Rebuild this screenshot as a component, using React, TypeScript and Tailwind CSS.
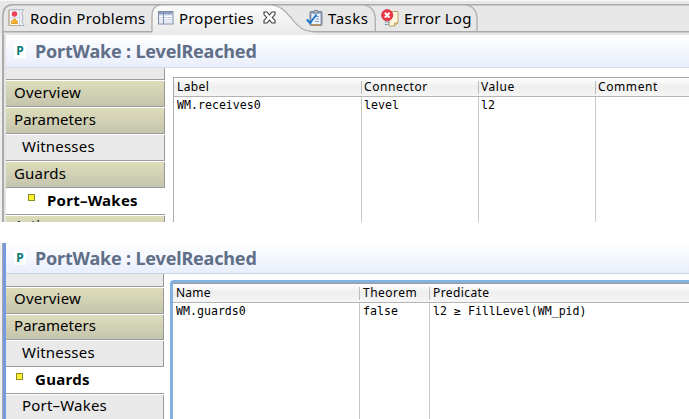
import type { ReactNode } from "react";

const SANS = "font-['Noto_Sans',sans-serif]";
const MONO = "font-['DejaVu_Sans_Mono',monospace]";

function ProblemsIcon() {
  return (
    <svg width="17" height="18" viewBox="0 0 17 18" className="block">
      <path d="M1 .8H15.5C14 3 13 5 14.5 7C16 9 14 10.500 14 12.500C14 14.500 16 15 16 16.500H1Z" fill="#f3f7fc" stroke="#a3acbc" strokeWidth="1" />
      <path d="M1 .8V16.500H12" fill="none" stroke="#c3a878" />
      <path d="M11.500 1V16M1 8.800H14" stroke="#c9d6ea" />
      <circle cx="6.500" cy="5" r="2.800" fill="#ed4354" />
      <path d="M6.500 9.500L9.500 12.500V14.500H3.500V12.500Z" fill="#fbb52c" stroke="#d58b1d" strokeWidth=".8" />
    </svg>
  );
}

function TableIcon() {
  return (
    <svg width="16" height="14" viewBox="0 0 16 14" className="block">
      <rect x=".5" y=".5" width="14.500" height="12.500" fill="#fff" stroke="#7d8ba5" />
      <rect x="1" y="1" width="13.500" height="2.500" fill="#8d9fc0" />
      <path d="M1 4H15M1 6.500H15M1 8.800H15M1 11H15" stroke="#b5c2d9" strokeWidth=".8" />
      <path d="M5.500 1V13" stroke="#7d8fae" />
    </svg>
  );
}

function CloseIcon() {
  return (
    <svg width="13" height="13" viewBox="0 0 13 13" className="block">
      <path d="M1 1H4L6.500 3.800L9 1H12V3.500L9.300 6.500L12 9.500V12H9L6.500 9.200L4 12H1V9.500L3.700 6.500L1 3.500Z" fill="#fff" stroke="#3d3d3d" strokeWidth="1.100" />
    </svg>
  );
}

function TasksIcon() {
  return (
    <svg width="17" height="18" viewBox="0 0 17 18" className="block">
      <rect x="4" y="2.500" width="12" height="14" rx="1" fill="#8e99af" stroke="#7884a0" />
      <path d="M14.500 16H5" stroke="#be9551" strokeWidth="1.500" />
      <rect x="5.500" y="4.500" width="9" height="10.500" fill="#eaf1fb" />
      <path d="M7 4L8 1.500H12L13 4Z" fill="#aab4c4" stroke="#7d879a" />
      <path d="M9 7.500H13M10 10H13M9 12.500H13" stroke="#7ba0d0" />
      <path d="M.8 10.500L4 14L10.500 5.500" fill="none" stroke="#1976cc" strokeWidth="1.900" />
    </svg>
  );
}

function ErrorLogIcon() {
  return (
    <svg width="18" height="18" viewBox="0 0 18 18" className="mt-px block">
      <path d="M6 2.500H17V14L13.500 17H8V12" fill="#fff6dc" stroke="#b9a36e" />
      <path d="M13.500 17V14H17" fill="#e6cc8b" stroke="#b08d4b" strokeWidth=".8" />
      <circle cx="6.200" cy="6.200" r="5.600" fill="#ec3545" stroke="#d52d3e" strokeWidth=".8" />
      <path d="M3.800 3.800L8.600 8.600M8.600 3.800L3.800 8.600" stroke="#fff" strokeWidth="2" />
      <path d="M4 13H9M4 15.500H7.500" stroke="#2d73a5" strokeWidth="1.200" strokeDasharray="1.500 1" />
    </svg>
  );
}

function TabBar() {
  return (
    <div className="relative h-[35px] w-full shrink-0 bg-[#e7e7e7]">
      <svg className="absolute inset-0" width="689" height="35" viewBox="0 0 689 35">
        <defs>
          <linearGradient id="tab" x1="0" y1="0" x2="0" y2="1">
            <stop offset="0" stopColor="#fcfcfc" />
            <stop offset="1" stopColor="#e9e9e9" />
          </linearGradient>
        </defs>
        <path d="M0 .5H689" stroke="#f8f8f8" />
        <path d="M2.800 35V16Q3 5 13 4.800H689M3 31.800H152M312 31.800H689" fill="none" stroke="#aaa" strokeWidth="1.500" />
        <path d="M152 32V16Q152 5 162 5H270C280 5 285 11 292 19C299 28 304 31 314 32V35H152Z" fill="url(#tab)" />
        <path d="M152 32V16Q152 5 162 5H270C280 5 285 11 292 19C299 28 304 31 314 31.800" fill="none" stroke="#aaa" strokeWidth="1.200" />
        <path d="M364 5Q374 6 375.300 18V31M466 5Q476 6 477 18V31" fill="none" stroke="#aaa" strokeWidth="1.200" />
      </svg>
      <div className={`relative flex h-[35px] items-center pb-0 pl-2 text-[15px] leading-[20px] text-black ${SANS}`}>
        <div className="flex w-[149px] items-center gap-[5px]">
          <ProblemsIcon />
          <span className="whitespace-nowrap tracking-[0.28px]">Rodin Problems</span>
        </div>
        <div className="flex w-[149px] items-center pl-[1px]">
          <TableIcon />
          <span className="ml-[5px] mr-[9px] w-[75px] whitespace-nowrap tracking-[0.2px]">Properties</span>
          <CloseIcon />
        </div>
        <div className="flex w-[75px] items-center gap-[5px]">
          <TasksIcon />
          <span className="tracking-[0.5px]">Tasks</span>
        </div>
        <div className="flex items-center gap-[5px]">
          <ErrorLogIcon />
          <span className="whitespace-nowrap tracking-[0.2px]">Error Log</span>
        </div>
      </div>
    </div>
  );
}

function Title({ className }: { className: string }) {
  return (
    <div className={`flex shrink-0 items-center border-b bg-gradient-to-b from-white to-[#e9eefb] pl-2 ${className}`}>
      <span className="flex h-[14px] w-[12px] items-center justify-center bg-white font-['Noto_Sans',sans-serif] text-[12px] font-bold text-[#087b74]">P</span>
      <h1 className={`ml-[9px] whitespace-nowrap text-[18px] font-bold leading-[24px] tracking-[-0.18px] text-[#5f6f88] ${SANS}`}>
        PortWake : LevelReached
      </h1>
    </div>
  );
}

type Kind = "section" | "sub" | "active";

function NavRow({ kind, className, children }: { kind: Kind; className: string; children: ReactNode }) {
  const look = {
    section: "border-r border-r-[#999] bg-gradient-to-b from-[#dddcba] to-[#c5c5ae]",
    sub: "border-r border-r-[#999] bg-[#e9e9e9]",
    active: "bg-white font-bold",
  }[kind];
  return (
    <div className="shrink-0 border-t border-[#9b9b9f] bg-white pt-px">
      <div className={`flex items-center whitespace-nowrap text-[15px] leading-[20px] text-black ${SANS} ${look} ${className}`}>
        {children}
      </div>
    </div>
  );
}

function Marker() {
  return <span className="mb-[5px] h-[7px] w-[7px] shrink-0 border border-[#8f8d20] bg-[#f9f132]" />;
}

interface Column {
  label: string;
  value: string;
  width: string;
  tracking: string;
}

function Table({ columns, inset }: { columns: Column[]; inset: string }) {
  return (
    <div className="flex min-h-0 flex-1 bg-white">
      {columns.map((c, i) => (
        <div key={c.label} className={`flex flex-col ${c.width}`}>
          <div className="flex h-[19px] shrink-0 items-center border-b border-[#b5b5b5] bg-gradient-to-b from-white via-[#eeeeee] to-[#f6f6f6]">
            <div className={`flex h-[13px] items-center ${i > 0 ? `border-l border-[#bdbdbd] ${inset}` : "pl-[3px]"}`}>
              <span className={`whitespace-nowrap text-[12px] leading-[16px] text-black ${SANS} ${c.tracking}`}>{c.label}</span>
            </div>
          </div>
          <div className={`min-h-0 flex-1 ${i > 0 ? `border-l border-[#c8c8c8] ${inset}` : "pl-[3px]"}`}>
            <span className={`block whitespace-nowrap text-[11.600px] leading-[16px] text-black ${MONO}`}>{c.value}</span>
          </div>
        </div>
      ))}
    </div>
  );
}

const wakes: Column[] = [
  { label: "Label", value: "WM.receives0", width: "w-[187px]", tracking: "tracking-[0.4px]" },
  { label: "Connector", value: "level", width: "w-[117px]", tracking: "tracking-[0.55px]" },
  { label: "Value", value: "l2", width: "w-[117px]", tracking: "tracking-[0.55px]" },
  { label: "Comment", value: "", width: "flex-1", tracking: "tracking-[0.6px]" },
];

const guards: Column[] = [
  { label: "Name", value: "WM.guards0", width: "w-[186px]", tracking: "tracking-[0.2px]" },
  { label: "Theorem", value: "false", width: "w-[70px]", tracking: "tracking-[0.5px]" },
  { label: "Predicate", value: "l2 ≥ FillLevel(WM_pid)", width: "flex-1", tracking: "tracking-[0.4px]" },
];

export default function App() {
  return (
    <div className="flex h-[419px] w-[689px] flex-col overflow-hidden bg-white">
      <section className="flex h-[222px] shrink-0 flex-col overflow-hidden">
        <TabBar />
        <div className="flex min-h-0 flex-1">
          <div className="w-[6px] shrink-0 border-r-2 border-[#e4e4e4] bg-gradient-to-r from-[#efefef] from-[50%] to-[#aaaaaa] to-[50%]" />
          <div className="flex min-w-0 flex-1 flex-col">
            <Title className="h-[33px] border-[#cbdcf2]" />
            <div className="flex min-h-0 flex-1">
              <nav className="flex w-[159px] shrink-0 flex-col overflow-hidden">
                <div className="h-[11px] shrink-0 border-r border-[#999] bg-[#e9e9e9]" />
                <NavRow kind="section" className="h-[25px] pb-[3px] pl-2"><span className="tracking-[0.2px]">Overview</span></NavRow>
                <NavRow kind="section" className="h-[25px] pb-[3px] pl-2"><span className="tracking-[0.05px]">Parameters</span></NavRow>
                <NavRow kind="sub" className="h-[25px] pb-[3px] pl-4"><span className="tracking-[0.2px]">Witnesses</span></NavRow>
                <NavRow kind="section" className="h-[25px] pb-[3px] pl-2"><span className="tracking-[0.2px]">Guards</span></NavRow>
                <NavRow kind="active" className="h-[25px] pb-[3px] pl-[22px]">
                  <Marker />
                  <span className="ml-[12px] tracking-[0.25px]">Port–Wakes</span>
                </NavRow>
                <NavRow kind="section" className="h-[25px] pb-[7px] pl-2"><span>Actions</span></NavRow>
              </nav>
              <div className="flex min-w-0 flex-1 flex-col pl-2 pt-[9px]">
                <div className="flex min-h-0 flex-1 flex-col border-l border-t border-[#aaa]">
                  <Table columns={wakes} inset="pl-[2px]" />
                </div>
              </div>
            </div>
          </div>
        </div>
      </section>
      <section className="mt-[21px] flex min-h-0 flex-1">
        <div className="w-[6px] shrink-0 border-r-[3px] border-[#7699e2] bg-gradient-to-r from-[#f0f0f0] from-[66%] to-[#aaa] to-[66%]" />
        <div className="flex min-w-0 flex-1 flex-col">
          <Title className="h-[31px] border-[#c7d7e8]" />
          <div className="flex min-h-0 flex-1">
            <nav className="flex w-[158px] shrink-0 flex-col overflow-hidden">
              <div className="h-[12px] shrink-0 border-r border-[#999] bg-[#e9e9e9]" />
              <NavRow kind="section" className="h-[25px] pb-[5px] pl-2"><span className="tracking-[0.2px]">Overview</span></NavRow>
              <NavRow kind="section" className="h-[24px] pb-[4px] pl-2"><span className="tracking-[0.05px]">Parameters</span></NavRow>
              <NavRow kind="sub" className="h-[25px] pb-[3px] pl-4"><span className="tracking-[0.2px]">Witnesses</span></NavRow>
              <NavRow kind="active" className="h-[25px] pb-[3px] pl-[10px]">
                <Marker />
                <span className="ml-[12px] tracking-[0.3px]">Guards</span>
              </NavRow>
              <NavRow kind="sub" className="h-[25px] pb-[5px] pl-4"><span className="tracking-[0.2px]">Port–Wakes</span></NavRow>
            </nav>
            <div className="flex min-w-0 flex-1 flex-col pl-[6px] pt-[6px]">
              <div className="flex min-h-0 flex-1 flex-col rounded-tl-[4px] border-l-[3px] border-t-[3px] border-[#83b2e0]">
                <div className="flex min-h-0 flex-1 flex-col border-t border-[#999]">
                  <Table columns={guards} inset="pl-[3px]" />
                </div>
              </div>
            </div>
          </div>
        </div>
      </section>
    </div>
  );
}
